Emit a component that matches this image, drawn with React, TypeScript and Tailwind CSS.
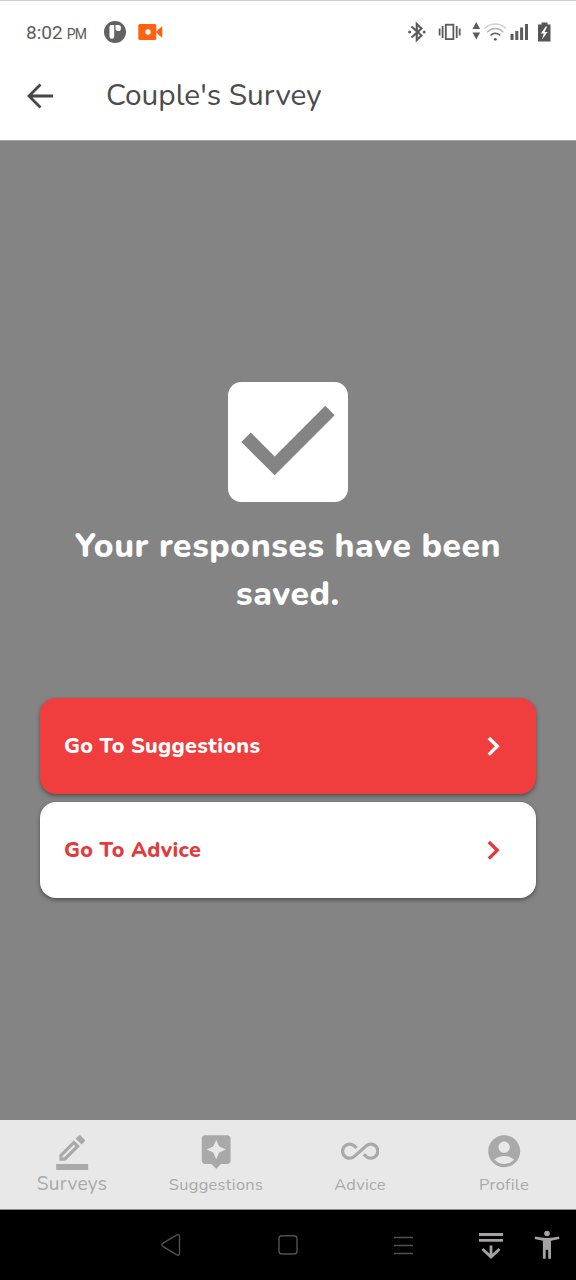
import React from "react";

const nunito = "font-['Nunito','Lato',sans-serif]";

function StatusBar() {
  return (
    <div className="flex h-[64px] items-center border-t border-[#cfcfcf] pl-[26px] pr-[24px] text-[#5c5c5c]">
      <div className="flex items-baseline whitespace-nowrap pt-[1px] font-['Roboto',sans-serif]">
        <span className="text-[19px]">8:02</span>
        <span className="ml-[4px] text-[14px] tracking-[-0.6px]">PM</span>
      </div>
      <svg className="mb-[2px] ml-[17.800px] h-[22px] w-[22px]" viewBox="0 0 22 22">
        <circle cx="11" cy="11" r="11" fill="#626262" />
        <path d="M5.500 5.800q0-1.800 1.800-1.800h2.900v11.400a2.350 2.350 0 0 1-4.700 0z" fill="#fff" />
        <path d="M11.500 4h2.800q2.600 0 2.600 2.600v.8a2.700 2.700 0 0 1-5.400 0z" fill="#fff" />
      </svg>
      <svg className="mb-[2px] ml-[12px] h-[18px] w-[26px]" viewBox="0 0 26 18">
        <rect x="0.300" y="1" width="18" height="16" rx="1.600" fill="#fe6110" />
        <path d="M18 9l3-3.200 3.300-2.500v11.400L21 12.200z" fill="#fe6110" />
        <circle cx="10" cy="9" r="2.700" fill="#fff" />
      </svg>
      <svg className="mb-[2px] ml-auto h-[24px] w-[144px]" viewBox="408 20 144 24">
        <g fill="none" stroke="#5c5c5c" strokeWidth="2.200">
          <path d="M411.500 26.500l10 9-4.700 4.500v-16l4.700 4.500-10 9" />
        </g>
        <circle cx="409.600" cy="32" r="1.500" fill="#5c5c5c" />
        <circle cx="424.200" cy="32" r="1.500" fill="#5c5c5c" />
        <rect x="445.800" y="24.700" width="7.600" height="14.400" fill="none" stroke="#5c5c5c" strokeWidth="1.800" />
        <path d="M442.600 26v12M456.700 26v12M439.600 28.500v7M459.700 28.500v7" stroke="#5c5c5c" strokeWidth="1.800" />
        <path d="M476.300 22l3.800 7h-7.600zM476.300 39.500l3.800-7h-7.600z" fill="#5c5c5c" />
        <g fill="none" strokeLinecap="round" strokeWidth="1.500">
          <path d="M485 28.300a14.500 14.500 0 0 1 20.600 0" stroke="#d0d0d0" />
          <path d="M487.700 31.700a10.800 10.800 0 0 1 15.200 0" stroke="#b5b5b5" />
          <path d="M490.900 35a6.400 6.400 0 0 1 8.800 0" stroke="#5c5c5c" />
        </g>
        <circle cx="495.300" cy="39.300" r="1.400" fill="#5c5c5c" />
        <path d="M510.500 34h3v6h-3zM515.300 31h3v9h-3zM520.100 27.500h3v12.500h-3zM525 24h3v16h-3z" fill="#5c5c5c" />
        <path d="M541.500 22.500h6v2h3v17h-12.500v-17h3.500z" fill="#555" />
        <path d="M545.800 26.500l-5 7h3l-1.800 6 5.600-7.500h-3l2.600-5.500z" fill="#fff" />
      </svg>
    </div>
  );
}

function AppBar() {
  return (
    <header className="flex h-[76px] items-center bg-white pb-[12px] pl-[27px]">
      <svg className="h-[26px] w-[27px]" viewBox="0 0 27 26" fill="none" stroke="#484546" strokeWidth="2.800">
        <path d="M26 13H2M13.500 1.500L2 13l11.500 11.500" />
      </svg>
      <h1 className={`${nunito} ml-[52px] whitespace-nowrap text-[29.800px] leading-[40px] text-[#4d4a4b]`}>
        Couple's Survey
      </h1>
    </header>
  );
}

function ActionButton({ label, className }: { label: string; className: string }) {
  return (
    <button
      className={`${nunito} ${className} flex h-[96px] w-full items-center justify-between rounded-[16px] pl-[24px] pr-[35px] text-left text-[21.500px] font-extrabold tracking-[0.3px] shadow-[0_2px_4px_rgba(0,0,0,0.4)]`}
    >
      <span className="whitespace-nowrap pb-[1px]">{label}</span>
      <svg className="h-[20px] w-[14px]" viewBox="0 0 14 20" fill="none" stroke="currentColor" strokeWidth="3.400">
        <path d="M1.800 2l8.500 8.300-8.500 8.300" />
      </svg>
    </button>
  );
}

const tabs = [
  {
    label: "Surveys",
    text: "text-[19.2px] tracking-[0.25px]",
    d: "M16.810 8.940l-3.750-3.750L4 14.250V18h3.750l9.060-9.060zM6 16v-.92l7.060-7.060.92.92L6.920 16H6zM19.710 6.040a.996.996 0 000-1.410l-2.340-2.340c-.2-.2-.45-.29-.71-.29s-.51.1-.7.29l-1.830 1.830 3.750 3.750 1.830-1.830zM2 20h20v4H2z",
  },
  {
    label: "Suggestions",
    text: "text-[16.4px] tracking-[0.3px] mt-[1px]",
    d: "M19 2H5c-1.110 0-2 .9-2 2v14c0 1.100.89 2 2 2h4l3 3 3-3h4c1.100 0 2-.9 2-2V4c0-1.100-.9-2-2-2zm-5.120 10.880L12 17l-1.880-4.120L6 11l4.120-1.880L12 5l1.880 4.120L18 11l-4.120 1.880z",
  },
  {
    label: "Advice",
    text: "text-[16.4px] tracking-[0.3px] mt-[1px]",
    d: "M18.600 6.620c-1.440 0-2.800.56-3.770 1.530L12 10.660 10.480 12h.01L7.800 14.390c-.64.64-1.490.99-2.400.99-1.870 0-3.390-1.510-3.390-3.380S3.530 8.620 5.400 8.620c.91 0 1.760.35 2.440 1.030l1.130 1 1.510-1.340L9.220 8.200C8.200 7.180 6.840 6.620 5.400 6.620 2.420 6.620 0 9.040 0 12s2.420 5.380 5.400 5.380c1.440 0 2.800-.56 3.770-1.530l2.830-2.500.01.01L13.520 12h-.01l2.690-2.390c.64-.64 1.490-.99 2.400-.99 1.870 0 3.390 1.510 3.390 3.380s-1.520 3.380-3.390 3.380c-.9 0-1.760-.35-2.440-1.030l-1.140-1.010-1.510 1.340 1.270 1.120c1.020 1.010 2.370 1.570 3.820 1.570 2.980 0 5.400-2.410 5.400-5.380s-2.420-5.370-5.400-5.370z",
  },
  {
    label: "Profile",
    text: "text-[16.4px] tracking-[0.3px] mt-[1px]",
    d: "M12 2C6.480 2 2 6.480 2 12s4.480 10 10 10 10-4.480 10-10S17.520 2 12 2zm0 4c1.930 0 3.500 1.570 3.500 3.500S13.930 13 12 13s-3.500-1.570-3.500-3.500S10.070 6 12 6zm0 14c-2.030 0-4.430-.82-6.140-2.880C7.550 15.800 9.680 15 12 15s4.450.8 6.140 2.120C16.430 19.180 14.030 20 12 20z",
  },
];

function TabBar() {
  return (
    <nav className="grid h-[90px] grid-cols-4 border-b border-[#8a8a8a] bg-[#e8e8e8] pt-[12px] text-[#a9a9a9]">
      {tabs.map((tab) => (
        <div key={tab.label} className="flex flex-col items-center">
          <svg className="h-[38.4px] w-[38.4px] shrink-0" viewBox="0 0 24 24" fill="currentColor">
            <path d={tab.d} />
          </svg>
          <span className={`${nunito} ${tab.text} whitespace-nowrap leading-[28px]`}>{tab.label}</span>
        </div>
      ))}
    </nav>
  );
}

function SystemBar() {
  return (
    <div className="h-[70px] bg-black">
      <svg className="h-[70px] w-full" viewBox="0 1210 576 70" fill="none">
        <g stroke="#505050" strokeWidth="1.400">
          <path d="M163.200 1243.200l13.200-8.100q3.100-1.600 3.100 1.700v16.200q0 3.300-3.100 1.700l-13.200-8.100q-2.600-1.700 0-3.400z" />
          <rect x="279" y="1235.700" width="18" height="18.300" rx="3" />
          <path d="M394 1237.500h19M394 1245.500h19M394 1253.500h19" />
        </g>
        <g stroke="#a5a2a3" strokeWidth="2.800">
          <path d="M479 1234.500h24M479 1240.300h24M491 1245.500v12M482.500 1249l8.500 8 8.500-8" />
        </g>
        <g fill="#a5a2a3">
          <circle cx="547" cy="1233.500" r="2.800" />
          <path d="M535.200 1236.600q11.800 2.600 23.800 0l.5 2.500-8.500 1.600v18h-2.800v-9h-2.500v9h-2.800v-18l-8.300-1.600z" />
        </g>
      </svg>
    </div>
  );
}

export default function App() {
  return (
    <div className="flex h-[1280px] w-[576px] flex-col overflow-hidden bg-white">
      <StatusBar />
      <AppBar />
      <main className="flex flex-1 flex-col items-center border-t border-[#a4a4a4] bg-[#848484] px-[40px] pt-[221.4px]">
        <svg className="h-[160px] w-[160px] shrink-0" viewBox="0 0 24 24" fill="#fff">
          <path d="M19 3H5c-1.110 0-2 .9-2 2v14c0 1.100.89 2 2 2h14c1.110 0 2-.9 2-2V5c0-1.100-.89-2-2-2zm-9 14l-5-5 1.410-1.410L10 14.170l7.590-7.590L19 8l-9 9z" />
        </svg>
        <h2 className={`${nunito} whitespace-nowrap text-center text-[33.6px] font-extrabold leading-[48px] tracking-[0.6px] text-white`}>
          Your responses have been
          <br />
          saved.
        </h2>
        <div className="mt-[80px] flex w-full flex-col gap-[8px]">
          <ActionButton label="Go To Suggestions" className="bg-[#f03e3e] text-white" />
          <ActionButton label="Go To Advice" className="bg-white text-[#e03c3e]" />
        </div>
      </main>
      <TabBar />
      <SystemBar />
    </div>
  );
}
